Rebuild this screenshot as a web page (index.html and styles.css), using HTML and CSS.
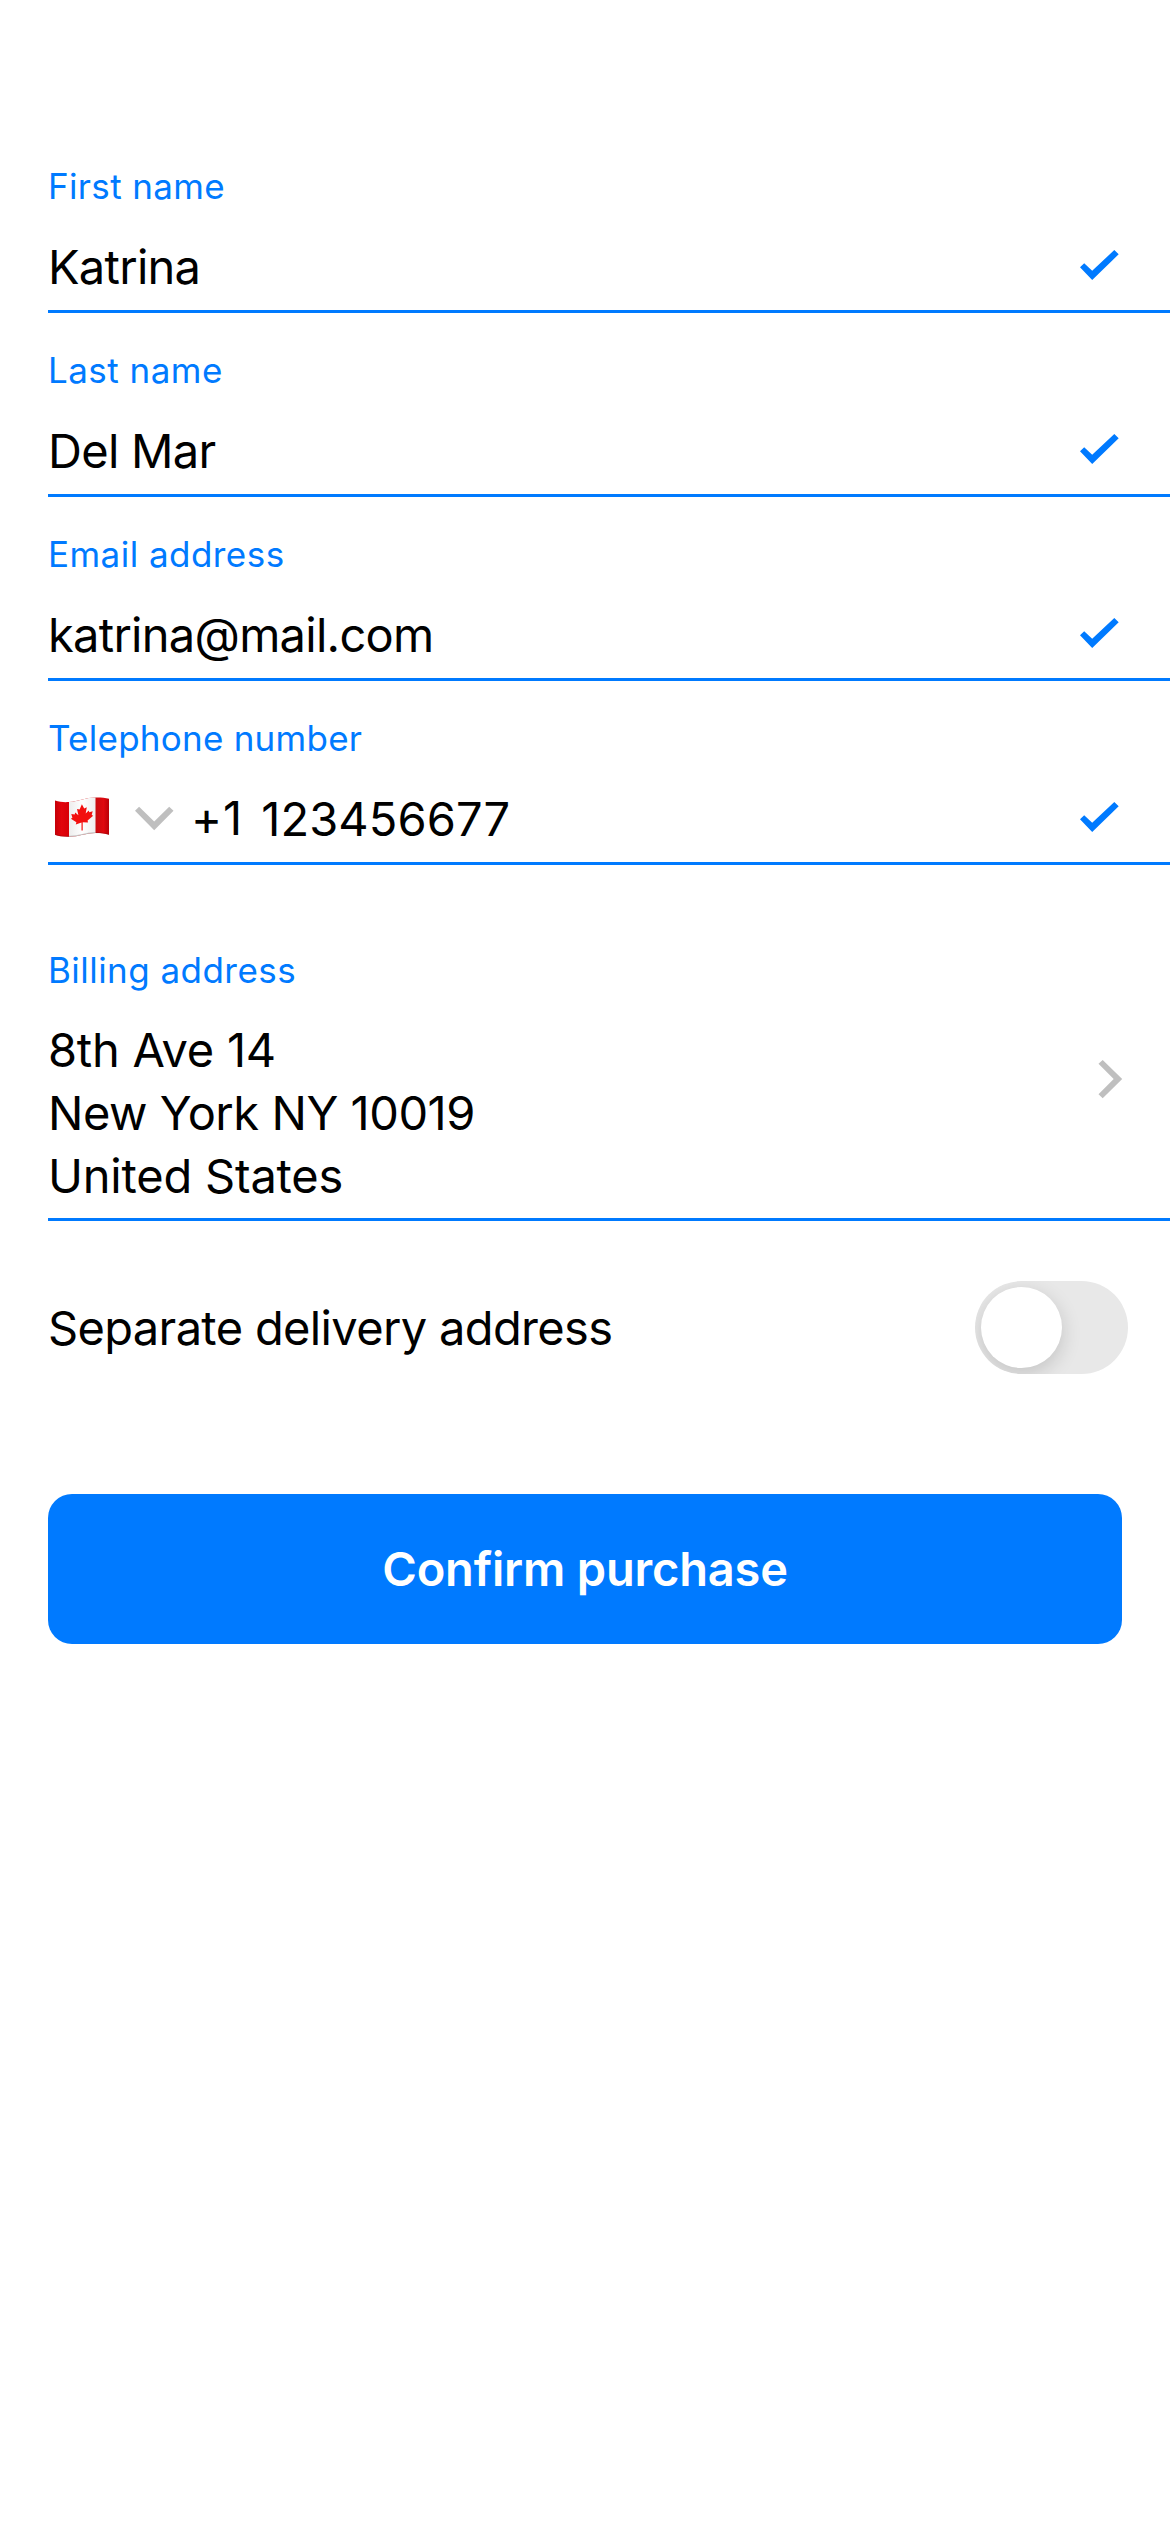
FILE: index.html
```html
<!DOCTYPE html>
<html lang="en">
<head>
<meta charset="utf-8">
<title>Confirm purchase</title>
<link rel="stylesheet" href="styles.css">
</head>
<body>
<svg class="symbols" aria-hidden="true">
  <symbol id="check" viewBox="0 0 40 30">
    <path d="M1 17.2 5.2 13.2 13.2 20.8 35.3 0 39.7 4.2 13.2 29.9Z"/>
  </symbol>
</svg>
<main class="checkout">
  <section class="field">
    <div class="label label-first">First name</div>
    <div class="row"><span class="value">Katrina</span><svg class="check"><use href="#check"/></svg></div>
  </section>
  <section class="field">
    <div class="label">Last name</div>
    <div class="row"><span class="value">Del Mar</span><svg class="check"><use href="#check"/></svg></div>
  </section>
  <section class="field">
    <div class="label">Email address</div>
    <div class="row"><span class="value">katrina@mail.com</span><svg class="check"><use href="#check"/></svg></div>
  </section>
  <section class="field">
    <div class="label label-phone">Telephone number</div>
    <div class="row">
      <svg class="flag" viewBox="0 0 54 40">
        <defs>
          <linearGradient id="red" x1="0" x2="1" y1="0" y2="0">
            <stop offset="0" stop-color="#c40008"/><stop offset=".12" stop-color="#e2040c"/><stop offset=".24" stop-color="#d80008"/>
            <stop offset=".76" stop-color="#c90b10"/><stop offset=".9" stop-color="#e0080f"/><stop offset="1" stop-color="#b80008"/>
          </linearGradient>
          <linearGradient id="white" x1="0" x2="1" y1="0" y2="0">
            <stop offset="0" stop-color="#ededed"/><stop offset=".5" stop-color="#ffffff"/><stop offset="1" stop-color="#efefef"/>
          </linearGradient>
        </defs>
        <path fill="url(#red)" d="M0 3.6C5 5.3 10 5.4 14 5.1C24 4.3 31 .5 40.500 .5C46 .4 50 .8 54 1.800V37.800C50 36.200 45 35.800 40.500 35.900C31 36 24 39.500 14 39.700C9 39.800 4 39.300 0 37.800Z"/>
        <path fill="url(#white)" d="M14 5.100C24 4.300 31 .5 40.500 .5V35.900C31 36 24 39.500 14 39.700Z"/>
        <path fill="none" stroke="#8a0006" stroke-opacity=".45" stroke-width=".9" d="M0 37.500C4 39 9 39.500 14 39.400M40.500 35.600C45 35.500 50 36 54 37.500"/>
        <path fill="none" stroke="#999" stroke-opacity=".6" stroke-width=".9" d="M14 39.400C24 39.200 31 35.700 40.500 35.500"/>
        <path fill="#f2100f" d="M26.900 7.300 29.200 11.400 31.800 10.200 30.700 16.600 33.700 13.600 34.300 15.200 37.700 14.300 36.700 18 38.200 18.700 32.600 23.500 33 25.500 27.700 25.300 27.700 33.400 26.500 33.500 26.500 25.600 20.800 27.400 21.400 25.200 15.900 21.700 17.400 20.700 16.300 17.100 19.700 17.400 20.200 15.600 23.400 18.200 22 11.900 24.600 12.400Z"/>
      </svg>
      <svg class="chevron-down" viewBox="0 0 40 25"><path d="M1 4.800 5.100 .8 20.200 15.600 35.200 .8 39.500 4.800 20.200 24.200Z"/></svg>
      <span class="value prefix">+1</span>
      <span class="value number">123456677</span>
      <svg class="check"><use href="#check"/></svg>
    </div>
  </section>
  <section class="field billing">
    <div class="label">Billing address</div>
    <div class="row">
      <div class="address">
        <div class="value street">8th Ave 14</div>
        <div class="value city">New York NY 10019</div>
        <div class="value country">United States</div>
      </div>
      <svg class="chevron-right" viewBox="0 0 25 40"><path d="M.5 4.800 4.700 .9 24.200 20 4.700 39.200 .5 35.300 15.700 20Z"/></svg>
    </div>
  </section>
  <section class="delivery">
    <span class="value">Separate delivery address</span>
    <div class="toggle" role="switch" aria-checked="false"><div class="knob"></div></div>
  </section>
  <button class="confirm">Confirm purchase</button>
</main>
</body>
</html>
```
FILE: styles.css
```css
* { box-sizing: border-box; }

body {
  margin: 0;
  background: #fff;
  color: #000;
  font-family: Inter, "Liberation Sans", sans-serif;
}

svg { display: block; flex: none; }

.symbols { display: none; }

.checkout {
  display: flex;
  flex-direction: column;
  padding: 129px 0 0 48px;
}

.field {
  height: 184px;
  padding-top: 35px;
  border-bottom: 3px solid #007aff;
}

.label {
  color: #007aff;
  font-size: 35px;
  line-height: 44px;
  letter-spacing: 0.46px;
}

.label-first { letter-spacing: 0.35px; }
.label-phone { letter-spacing: 0.25px; }

.row {
  display: flex;
  align-items: center;
  margin-top: 27px;
}

.value {
  font-size: 47px;
  line-height: 63px;
  letter-spacing: -0.72px;
  white-space: nowrap;
}

.check {
  width: 40px;
  height: 30px;
  margin: 0 51px 3px auto;
  fill: #007aff;
}

.flag {
  width: 54px;
  height: 40px;
  margin-left: 7px;
  margin-bottom: 3px;
}

.chevron-down {
  width: 40px;
  height: 25px;
  margin-left: 25px;
  fill: #bfbfbf;
}

.prefix {
  margin: -2px 0 0 17px;
  letter-spacing: 1px;
}

.number {
  margin-left: 18px;
  letter-spacing: 0.1px;
}

.billing {
  height: 356px;
  padding-top: 83px;
}

.billing .row { margin-top: 26px; }

.street { letter-spacing: -0.23px; }
.city { letter-spacing: -0.46px; }
.country { letter-spacing: -0.2px; }

.chevron-right {
  width: 25px;
  height: 40px;
  margin: 0 47px 67px auto;
  fill: #bfbfbf;
}

.delivery {
  display: flex;
  align-items: center;
  justify-content: space-between;
  height: 93px;
  margin: 60px 42px 0 0;
}

.delivery .value { letter-spacing: -0.65px; }

.toggle {
  width: 153px;
  height: 93px;
  padding: 6px;
  border-radius: 47px;
  background: #e8e8e8;
  overflow: hidden;
}

.knob {
  width: 81px;
  height: 81px;
  border-radius: 50%;
  background: #fff;
  box-shadow: 0 6px 20px rgba(0, 0, 0, 0.16);
}

.confirm {
  height: 150px;
  margin: 120px 48px 0 0;
  padding: 0 0 2px;
  border: 0;
  border-radius: 24px;
  background: #007aff;
  color: #fff;
  font: 600 47px/63px Inter, "Liberation Sans", sans-serif;
  letter-spacing: -0.19px;
}
```
